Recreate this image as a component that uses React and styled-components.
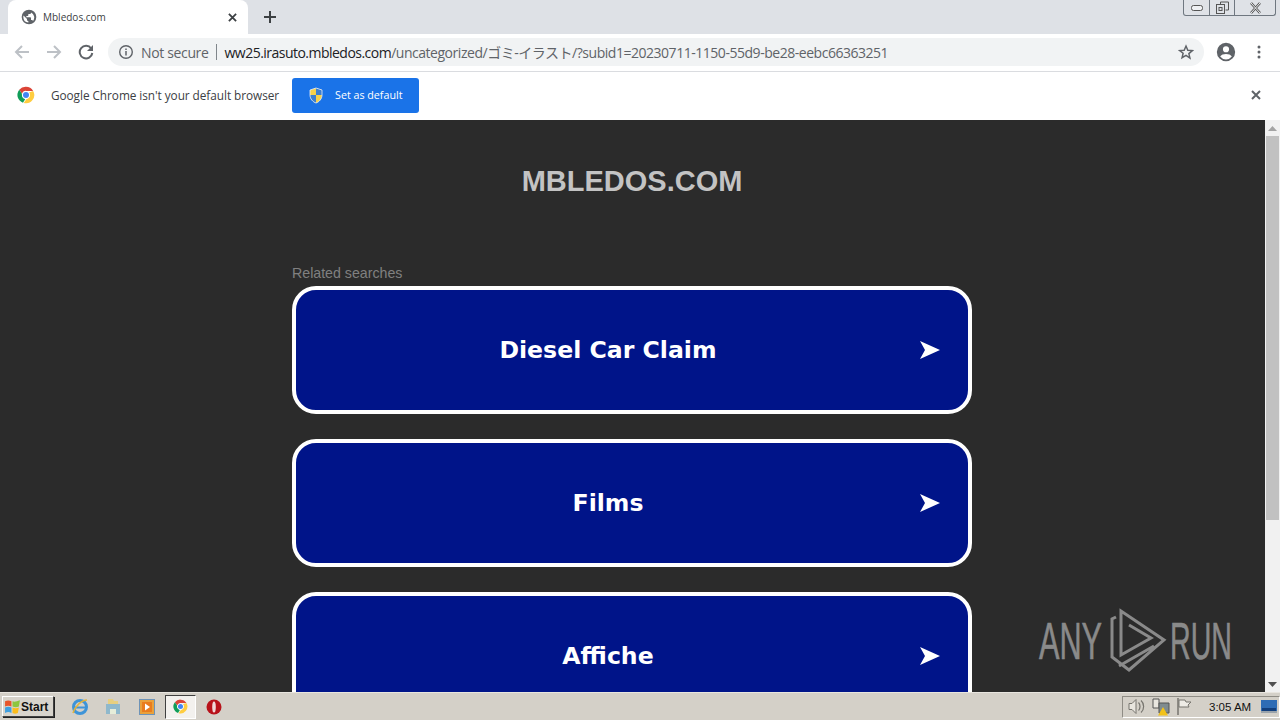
import React from "react";
import styled, { createGlobalStyle } from "styled-components";

const Global = createGlobalStyle`
  html, body { margin: 0; padding: 0; height: 100%; overflow: hidden; background: #2b2b2b; }
  * { box-sizing: border-box; }
`;

const Screen = styled.div`
  width: 1280px; height: 720px; display: flex; flex-direction: column; overflow: hidden; position: relative;
  font-family: "Open Sans", "Noto Sans CJK JP", sans-serif;
`;
const TabStrip = styled.div`
  height: 34px; background: #dee1e6; display: flex; align-items: flex-end; padding-left: 8px; flex: none; position: relative;
`;
const Tab = styled.div`
  width: 240px; height: 34px; background: #fff; border-radius: 8px 8px 0 0; display: flex; align-items: center;
  padding: 0 11px 0 13px; gap: 6px; font-size: 10px; color: #3c4043;
`;
const TabTitle = styled.span` flex: 1; `;
const NewTab = styled.div` width: 44px; height: 34px; display: flex; align-items: center; justify-content: center; `;
const WindowControls = styled.div`
  position: absolute; top: 0; right: 4px; width: 93px; height: 16px; border: 1px solid #6f7780; border-top: none;
  border-radius: 0 0 3px 3px; display: grid; grid-template-columns: 25px 25px 1fr; background: #dfe2e7;
`;
const WindowButton = styled.div`
  display: flex; align-items: center; justify-content: center;
  & + & { border-left: 1px solid #6f7780; }
`;
const Toolbar = styled.div`
  height: 38px; background: #fff; border-bottom: 1px solid #dadce0; display: flex; align-items: center; flex: none; padding: 0 0 1px 12px;
`;
const NavButton = styled.div` width: 32px; height: 32px; display: flex; align-items: center; justify-content: center; margin-left: ${p => p.$ml || 0}px; `;
const Omnibox = styled.div`
  margin-left: 6px; width: 1096px; height: 28px; border-radius: 14px; background: #f1f3f4; display: flex; align-items: center; padding-left: 10px; font-size: 14px; white-space: nowrap;
`;
const NotSecure = styled.span` color: #5f6368; margin-left: 7px; letter-spacing: -0.35px; `;
const Divider = styled.span` width: 1px; height: 16px; background: #80868b; margin: 0 8px 0 7px; `;
const Host = styled.span` color: #202124; letter-spacing: -0.52px; `;
const Path = styled.span` color: #5f6368; letter-spacing: -0.47px; `;
const Star = styled.div` margin-left: auto; margin-right: 10px; display: flex; `;
const ToolIcons = styled.div` display: flex; align-items: center; margin-left: 12px; gap: 21px; `;
const InfoBar = styled.div`
  height: 48px; background: #fff; display: flex; align-items: center; flex: none; padding: 0 0 2px 17px; font-size: 11.8px; color: #3c4043; position: relative;
`;
const InfoText = styled.span` margin-left: 16px; letter-spacing: -0.05px; `;
const DefaultButton = styled.div`
  margin-left: 13px; width: 127px; height: 35px; border-radius: 3px; background: #1a73e8; color: #fff; display: flex; align-items: center; padding-left: 16px; font-size: 10.7px; gap: 11px;
`;
const InfoClose = styled.div` margin-left: auto; margin-right: 19px; display: flex; `;
const Main = styled.div` flex: 1; min-height: 0; display: flex; background: #2b2b2b; `;
const Content = styled.div`
  flex: 1; min-width: 0; overflow: hidden; display: flex; flex-direction: column; align-items: center; padding: 42px 1px 0 0;
`;
const Brand = styled.h1`
  margin: 0; font: bold 29px/38px "Liberation Sans", sans-serif; color: #c3c3c3;
`;
const Column = styled.div` width: 680px; margin-top: 65px; flex: none; `;
const Related = styled.div` font: 14.2px/16px "Liberation Sans", sans-serif; color: #808080; margin-bottom: 5px; `;
const Card = styled.div`
  height: 128px; border: 4px solid #fff; border-radius: 24px; background: #001489; display: flex; align-items: center; justify-content: center; position: relative; margin-bottom: 25px; padding-right: 48px;
  font: bold 23.6px "DejaVu Sans", sans-serif; color: #fff;
`;
const Arrow = styled.svg` position: absolute; right: 27px; top: 50%; margin-top: -10px; `;
const Scrollbar = styled.div` width: 15px; background: #f1f1f1; display: flex; flex-direction: column; flex: none; `;
const ScrollButton = styled.div` height: ${p => p.$h}px; display: flex; align-items: center; justify-content: center; flex: none; `;
const ScrollTrack = styled.div` flex: 1; padding: 0 1px; `;
const ScrollThumb = styled.div` height: 384px; background: #c1c1c1; `;
const Watermark = styled.div`
  position: absolute; left: 1039px; top: 610px; display: flex; align-items: center; color: #8a8a8a; height: 62px;
  font: 52px/62px "Liberation Sans", sans-serif; -webkit-text-stroke: 0.6px #8a8a8a;
`;
const WatermarkWord = styled.span`
  display: inline-block; transform: scaleX(${p => p.$scale}); transform-origin: left center; width: ${p => p.$w}px;
`;
const WatermarkLogo = styled.svg` margin: 0 1px 0 7px; flex: none; `;
const Taskbar = styled.div`
  height: 28px; flex: none; background: #d4d0c8; border-top: 1px solid #e8e5df; display: flex; align-items: center; padding-left: 2px; position: relative;
`;
const StartButton = styled.div`
  width: 52px; height: 21px; background: #d8d4cc; border: 1px solid; border-color: #fff #404040 #404040 #fff; display: flex; align-items: center; padding-left: 1px;
  font: bold 12px "Liberation Sans", sans-serif; color: #111; box-shadow: 1px 1px 0 #222;
`;
const QuickIcon = styled.div`
  width: ${p => p.$active ? 31 : 33.5}px; height: ${p => p.$active ? 24 : 22}px; display: flex; align-items: center; justify-content: center;
  ${p => p.$active && "margin: 0 1.25px; background:#f3f1ee; border:1px solid; border-color:#404040 #fff #fff #404040;"}
`;
const QuickBar = styled.div` display: flex; align-items: center; margin-left: 9px; `;
const Tray = styled.div`
  margin-left: auto; width: 158px; height: 22px; border: 1px solid; border-color: #8f8c85 #fff #fff #8f8c85; display: flex; align-items: center; padding-left: 5px; gap: 6px; font: 11.5px "Liberation Sans", sans-serif; color: #111;
  & > * { flex: none; }
`;
const Clock = styled.span` margin-left: 11px; margin-right: 4px; white-space: nowrap; `;

const Globe = () => (
  <svg width="16" height="16" viewBox="0 0 24 24"><path fill="#5f6368" d="M12 1a11 11 0 1 0 0 22 11 11 0 0 0 0-22zM3.500 12c0-.8.1-1.500.3-2.200L9 15v1c0 1.100.9 2 2 2v2.400A8.500 8.500 0 0 1 3.500 12zm14.600 5.900c-.3-.8-1-1.400-1.900-1.400H15v-3c0-.6-.4-1-1-1H8v-2h2c.6 0 1-.4 1-1v-2h2c1.100 0 2-.9 2-2v-.4a8.500 8.500 0 0 1 3.100 12.800z"/></svg>
);
const XIcon = ({ s = 10, c = "#3c4043", w = 2 }) => (
  <svg width={s} height={s} viewBox="0 0 10 10"><path d="M1 1l8 8M9 1L1 9" stroke={c} strokeWidth={w} fill="none"/></svg>
);
const ChromeLogo = ({ s = 18 }) => (
  <svg width={s} height={s} viewBox="0 0 24 24">
    <path fill="#db4437" d="M12 1a11 11 0 0 1 9.500 5.500H12a5.500 5.500 0 0 0-5.300 4L3 5A11 11 0 0 1 12 1z"/>
    <path fill="#0f9d58" d="M3 5l3.700 5.500A5.500 5.500 0 0 0 11 17.400L8 22.300A11 11 0 0 1 3 5z"/>
    <path fill="#ffcd40" d="M21.500 6.500A11 11 0 0 1 9 22.600l3.700-5.200A5.500 5.500 0 0 0 16 8.500z"/>
    <circle cx="12" cy="12" r="5" fill="#fff"/><circle cx="12" cy="12" r="4" fill="#4285f4"/>
  </svg>
);
const Shield = () => (
  <svg width="16" height="17" viewBox="0 0 16 17">
    <path d="M8 1l6 2v5c0 4-3 7-6 8-3-1-6-4-6-8V3z" fill="#f7d14a"/>
    <path d="M8 1l6 2v5H8zM8 8v8c-3-1-6-4-6-8z" fill="#3d7fd0"/>
    <path d="M8 1l6 2v5c0 4-3 7-6 8-3-1-6-4-6-8V3z" fill="none" stroke="#e7eef8" strokeWidth=".8"/>
  </svg>
);
const CardArrow = () => (
  <Arrow width="22" height="20" viewBox="0 0 22 20"><path fill="#fff" d="M1 1l20 9-20 9 5-9z"/></Arrow>
);

const cards = ["Diesel Car Claim", "Films", "Affiche"];

export default function App() {
  return (
    <>
      <Global />
      <Screen>
        <TabStrip>
          <Tab>
            <Globe />
            <TabTitle>Mbledos.com</TabTitle>
            <XIcon s={9} />
          </Tab>
          <NewTab>
            <svg width="12" height="12" viewBox="0 0 12 12"><path d="M6 0v12M0 6h12" stroke="#3c4043" strokeWidth="2"/></svg>
          </NewTab>
          <WindowControls>
            <WindowButton><svg width="12" height="6" viewBox="0 0 12 6"><rect x=".5" y=".5" width="11" height="5" rx="2" fill="#eef0f3" stroke="#555"/></svg></WindowButton>
            <WindowButton><svg width="13" height="13" viewBox="0 0 13 13"><path d="M4.500 3V1h8v8h-3" fill="none" stroke="#555"/><rect x=".5" y="3.500" width="8" height="9" fill="none" stroke="#555"/><rect x="3" y="6.500" width="3" height="3" fill="none" stroke="#555"/></svg></WindowButton>
            <WindowButton><svg width="13" height="12" viewBox="0 0 13 12"><path d="M2 1l9 10M11 1L2 11" stroke="#555" strokeWidth="2.600" fill="none"/><path d="M2 1l9 10M11 1L2 11" stroke="#eef0f3" strokeWidth="1" fill="none"/></svg></WindowButton>
          </WindowControls>
        </TabStrip>
        <Toolbar>
          <NavButton $ml={-6}><svg width="16" height="16" viewBox="0 0 16 16"><path d="M15 8H2M8 2L2 8l6 6" fill="none" stroke="#bdc1c6" strokeWidth="2"/></svg></NavButton>
          <NavButton><svg width="16" height="16" viewBox="0 0 16 16"><path d="M1 8h13M8 2l6 6-6 6" fill="none" stroke="#bdc1c6" strokeWidth="2"/></svg></NavButton>
          <NavButton><svg width="16" height="16" viewBox="0 0 16 16"><path d="M13.200 4.500A6.300 6.300 0 1 0 14.300 9" fill="none" stroke="#5f6368" strokeWidth="2"/><path d="M15 1v6H9z" fill="#5f6368"/></svg></NavButton>
          <Omnibox>
            <svg width="16" height="16" viewBox="0 0 16 16"><circle cx="8" cy="8" r="6.300" fill="none" stroke="#5f6368" strokeWidth="1.400"/><path d="M8 7v4.500M8 4.500v1.500" stroke="#5f6368" strokeWidth="1.500"/></svg>
            <NotSecure>Not secure</NotSecure>
            <Divider />
            <Host>ww25.irasuto.mbledos.com</Host>
            <Path>/uncategorized/ゴミ-イラスト/?subid1=20230711-1150-55d9-be28-eebc66363251</Path>
            <Star><svg width="16" height="16" viewBox="0 0 24 24"><path d="M12 3l2.700 6.300 6.800.6-5.200 4.500 1.600 6.700L12 17l-5.900 3.600 1.600-6.700L2.500 9.900l6.800-.6z" fill="none" stroke="#5f6368" strokeWidth="2.200"/></svg></Star>
          </Omnibox>
          <ToolIcons>
            <svg width="20" height="20" viewBox="0 0 24 24"><path fill="#5f6368" d="M12 1a11 11 0 1 0 0 22 11 11 0 0 0 0-22zm0 4a3.700 3.700 0 1 1 0 7.400A3.700 3.700 0 0 1 12 5zm0 16a8.800 8.800 0 0 1-7-3.500c1-2 4.200-3 7-3s6 1 7 3a8.800 8.800 0 0 1-7 3.500z"/></svg>
            <svg width="4" height="14" viewBox="0 0 4 14"><g fill="#5f6368"><circle cx="2" cy="2" r="1.500"/><circle cx="2" cy="7" r="1.500"/><circle cx="2" cy="12" r="1.500"/></g></svg>
          </ToolIcons>
        </Toolbar>
        <InfoBar>
          <ChromeLogo />
          <InfoText>Google Chrome isn't your default browser</InfoText>
          <DefaultButton><Shield />Set as default</DefaultButton>
          <InfoClose><XIcon s={10} c="#5f6368" /></InfoClose>
        </InfoBar>
        <Main>
          <Content>
            <Brand>MBLEDOS.COM</Brand>
            <Column>
              <Related>Related searches</Related>
              {cards.map(t => (
                <Card key={t}>{t}<CardArrow /></Card>
              ))}
            </Column>
          </Content>
          <Scrollbar>
            <ScrollButton $h={16}><svg width="9" height="5" viewBox="0 0 9 5"><path d="M4.500 0L9 5H0z" fill="#a3a3a3"/></svg></ScrollButton>
            <ScrollTrack><ScrollThumb /></ScrollTrack>
            <ScrollButton $h={15}><svg width="9" height="5" viewBox="0 0 9 5"><path d="M4.500 5L9 0H0z" fill="#505050"/></svg></ScrollButton>
          </Scrollbar>
        </Main>
        <Taskbar>
          <StartButton>
            <svg width="17" height="17" viewBox="0 0 16 16"><path fill="#e8552b" d="M1 3c2-1 4-1 6 0v5C5 7 3 7 1 8z"/><path fill="#8dc63f" d="M8 3c2 1 4 0 7-1l-1 6c-2 1-4 1-6 0z"/><path fill="#3f9fe0" d="M1 9c2-1 4-1 6 0v5c-2-1-4-1-6 0z"/><path fill="#fbbc1b" d="M8 9c2 1 4 1 6 0l-1 5c-2 1-3 1-5 0z"/></svg>
            Start
          </StartButton>
          <QuickBar>
            <QuickIcon><svg width="18" height="18" viewBox="0 0 18 18"><circle cx="9" cy="9" r="6.500" fill="none" stroke="#3e94d8" strokeWidth="3"/><path d="M3 9.500h12" stroke="#3e94d8" strokeWidth="2"/><path d="M2 15C4 8 11 2 16 2" stroke="#e2b33c" strokeWidth="1.500" fill="none"/></svg></QuickIcon>
            <QuickIcon><svg width="16" height="17" viewBox="0 0 16 17"><path d="M3 1h5l1 2h4v5H3z" fill="#e7cf80"/><path d="M1 6h14v10H1z" fill="#8fb8cc"/><path d="M5 16v-5h6v5z" fill="#e6edd9"/></svg></QuickIcon>
            <QuickIcon><svg width="16" height="16" viewBox="0 0 16 16"><rect x=".5" y=".5" width="15" height="15" fill="#e9a13b" stroke="#6d93b8"/><rect x="3" y="3" width="10" height="10" fill="#e97c1e"/><path d="M6 4.500l5 3.500-5 3.500z" fill="#fff"/></svg></QuickIcon>
            <QuickIcon $active><ChromeLogo s={15} /></QuickIcon>
            <QuickIcon><svg width="16" height="16" viewBox="0 0 16 16"><circle cx="8" cy="8" r="7.500" fill="#b8121a"/><ellipse cx="8" cy="8" rx="1.800" ry="5.500" fill="#f0d8d8"/></svg></QuickIcon>
          </QuickBar>
          <Tray>
            <svg width="18" height="17" viewBox="0 0 18 17"><path d="M1 5.500h3l4-4v14l-4-4H1z" fill="#e9e6df" stroke="#77756f"/><path d="M10.500 4.500c2 2 2 6 0 8M13 2.500c3.500 3 3.500 9 0 12" fill="none" stroke="#77756f" strokeWidth="1.200"/></svg>
            <svg width="18" height="18" viewBox="0 0 18 18"><path d="M1 1h6v9H1z" fill="#e9e6df" stroke="#555"/><path d="M7 5h10v10H7z" fill="#7f8b8f" stroke="#555"/><path d="M11 9l5 8.500H6z" fill="#f2c21a"/></svg>
            <svg width="16" height="17" viewBox="0 0 16 17"><path d="M2 0v17" stroke="#77756f" strokeWidth="1.500"/><path d="M3 2h6l1 2h5l-3 3 1 2H3z" fill="#eeece6" stroke="#77756f"/></svg>
            <Clock>3:05 AM</Clock>
            <svg width="16" height="14" viewBox="0 0 16 14"><rect width="16" height="11" fill="#2e6cb5"/><rect x="1" y="8" width="14" height="3" fill="#133f7c"/><rect y="11" width="16" height="2" fill="#9aa3ab"/></svg>
          </Tray>
        </Taskbar>
        <Watermark>
          <WatermarkWord $w={63} $scale={0.59}>ANY</WatermarkWord>
          <WatermarkLogo width="60" height="66" viewBox="0 0 60 66" fill="none" stroke="#8a8a8a" strokeWidth="3"><path d="M7 9l-4 2v38l17 13 35-30L12 3v44l30-17-22-13M10 58l35-20"/></WatermarkLogo>
          <WatermarkWord $w={61} $scale={0.55}>RUN</WatermarkWord>
        </Watermark>
      </Screen>
    </>
  );
}
